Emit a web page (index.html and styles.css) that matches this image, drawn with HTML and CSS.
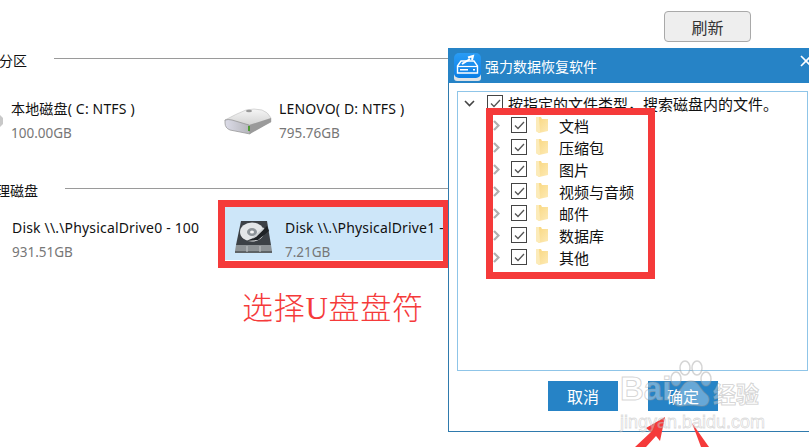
FILE: index.html
```html
<!DOCTYPE html>
<html lang="zh-CN">
<head>
    <meta charset="UTF-8">
    <meta name="viewport" content="width=device-width, initial-scale=1.0">
    <title>强力数据恢复软件</title>
    <link rel="stylesheet" href="styles.css">
</head>
<body>
    <svg class="icon-defs" width="0" height="0">
        <defs>
            <linearGradient id="driveTop" x1="0" y1="0" x2="0" y2="1">
                <stop offset="0" stop-color="#f6f6f6"/>
                <stop offset="1" stop-color="#c4c4c4"/>
            </linearGradient>
            <linearGradient id="driveFront" x1="0" y1="0" x2="1" y2="0">
                <stop offset="0" stop-color="#dcdce8"/>
                <stop offset="1" stop-color="#b4b4ba"/>
            </linearGradient>
            <linearGradient id="folderFill" x1="0" y1="0" x2="1" y2="1">
                <stop offset="0" stop-color="#f9d67c"/>
                <stop offset="1" stop-color="#fdeab6"/>
            </linearGradient>
            <linearGradient id="appFill" x1="0" y1="0" x2="0" y2="1">
                <stop offset="0" stop-color="#2a9cf5"/>
                <stop offset="1" stop-color="#0a7fe6"/>
            </linearGradient>
            <symbol id="tick" viewBox="0 0 11 9"><path d="M1 4.500 L4 7.500 L10 1" fill="none" stroke="#555" stroke-width="1.300"/></symbol>
            <symbol id="chevron" viewBox="0 0 7 11"><path d="M1 1 L5.500 5.500 L1 10" fill="none" stroke="#b0b0b0" stroke-width="2.200"/></symbol>
            <symbol id="folder" viewBox="0 0 13 16"><path d="M0 0 H5 L6 2 L12 2 V14 L3 16 L0 14 Z" fill="url(#folderFill)"/><path d="M0 0 H3 L4 15 L3 16 L0 14 Z" fill="#fcebb9"/></symbol>
        </defs>
    </svg>

    <div class="page">
        <button class="refresh-btn" type="button">刷新</button>

        <div class="section-head section-partition">
            <span class="section-title">本地分区</span>
            <span class="section-line"></span>
        </div>
        <div class="disk-row">
            <div class="disk-item disk-c">
                <svg class="icon-stub" width="4" height="14" viewBox="0 0 4 14"><path d="M0 1 L3 4 V10 L0 13Z" fill="#c8c8c8"/></svg>
                <div class="disk-text">
                    <div class="disk-name">本地磁盘( C: NTFS )</div>
                    <div class="disk-size">100.00GB</div>
                </div>
            </div>
            <div class="disk-item disk-d">
                <svg class="icon-drive" width="48" height="28" viewBox="0 0 48 28">
                    <path d="M1 13 Q12 7 22 3 Q30 1 38 3 Q44 5 47 11 L47 15 L27 25 L5 21 Z" fill="url(#driveTop)" stroke="#bdbdbd" stroke-width=".6"/>
                    <path d="M1 13 Q4 12 8 13 L25 18 L26 27 L6 23 Q1 21 1 16 Z" fill="url(#driveFront)" stroke="#8e8e8e" stroke-width=".7"/>
                    <path d="M25 18 L47 11 L47 15 L26 27 Z" fill="#9a9a9a"/>
                    <ellipse cx="25" cy="4" rx="3" ry="1.200" fill="#9a9a9a"/>
                    <rect x="24" y="19" width="2" height="5" fill="#4c9a32"/>
                </svg>
                <div class="disk-text">
                    <div class="disk-name">LENOVO( D: NTFS )</div>
                    <div class="disk-size">795.76GB</div>
                </div>
            </div>
        </div>

        <div class="section-head section-physical">
            <span class="section-title">物理磁盘</span>
            <span class="section-line"></span>
        </div>
        <div class="disk-row">
            <div class="disk-item disk-0">
                <div class="disk-text">
                    <div class="disk-name">Disk \\.\PhysicalDrive0 - 100</div>
                    <div class="disk-size">931.51GB</div>
                </div>
            </div>
            <div class="disk-item disk-1">
                <svg class="icon-hdd" width="40" height="34" viewBox="0 0 40 34">
                    <path d="M7 1 H33 L37 25 H2 Z" fill="#3c4146"/>
                    <ellipse cx="18" cy="12" rx="12" ry="9.500" fill="#e3e6e8"/>
                    <ellipse cx="18" cy="12" rx="5" ry="4" fill="#8d9499"/>
                    <ellipse cx="18" cy="12" rx="2" ry="1.500" fill="#f5f5f5"/>
                    <path d="M33 6 L22 17 L12 21 L24 20 L35 11 Z" fill="#1f2326"/>
                    <path d="M30 8 L19 18" stroke="#c9ced1" stroke-width="1.200"/>
                    <path d="M2 25 H37 L38 31 H1 Z" fill="#8d9295"/>
                    <path d="M1 31 H38 V33 H1 Z" fill="#5e6366"/>
                    <path d="M13 26 V32 M26 26 V32" stroke="#c4c8ca" stroke-width="1"/>
                </svg>
                <div class="disk-text">
                    <div class="disk-name">Disk \\.\PhysicalDrive1 - 7.</div>
                    <div class="disk-size">7.21GB</div>
                </div>
            </div>
        </div>
    </div>

    <div class="mark-box mark-drive"></div>
    <div class="mark-note">选择<span class="mark-latin">U</span>盘盘符</div>

    <!-- 弹出窗口 -->
    <div class="dialog">
        <div class="dialog-title">
            <svg class="app-icon" width="28" height="28" viewBox="0 0 28 28">
                <rect x="0" y="20" width="27" height="8" rx="3" fill="#dfe3e6"/>
                <rect x="0" y="0" width="27" height="25" rx="5" fill="url(#appFill)"/>
                <path d="M3.500 13 L7 8 H20 L23.500 13 V20 H3.500 Z" fill="none" stroke="#fff" stroke-width="1.400"/>
                <path d="M3.500 13.500 H23.500" stroke="#fff" stroke-width="1.200"/>
                <path d="M8 11 L16 6 M14 4.500 L19 3 L18 7" stroke="#fff" stroke-width="2" fill="none"/>
                <path d="M6 16.800 H14 M19 16.800 H21" stroke="#fff" stroke-width="1.600"/>
            </svg>
            <span class="dialog-name">强力数据恢复软件</span>
            <svg class="dialog-close" width="12" height="12" viewBox="0 0 12 12"><path d="M1 1 L11 11 M11 1 L1 11" stroke="#fff" stroke-width="1.600"/></svg>
        </div>
        <div class="tree">
            <div class="tree-root">
                <svg class="arrow-down" width="11" height="7" viewBox="0 0 11 7"><path d="M1 1 L5.500 5.500 L10 1" fill="none" stroke="#444" stroke-width="1.600"/></svg>
                <span class="check"><svg width="11" height="9"><use href="#tick"/></svg></span>
                <span class="tree-root-label">按指定的文件类型，搜索磁盘内的文件。</span>
            </div>
            <div class="tree-list">
                <div class="tree-row">
                    <svg class="arrow-right" width="7" height="11"><use href="#chevron"/></svg>
                    <span class="check"><svg width="11" height="9"><use href="#tick"/></svg></span>
                    <svg class="folder" width="13" height="16"><use href="#folder"/></svg>
                    <span class="tree-label">文档</span>
                </div>
                <div class="tree-row">
                    <svg class="arrow-right" width="7" height="11"><use href="#chevron"/></svg>
                    <span class="check"><svg width="11" height="9"><use href="#tick"/></svg></span>
                    <svg class="folder" width="13" height="16"><use href="#folder"/></svg>
                    <span class="tree-label">压缩包</span>
                </div>
                <div class="tree-row">
                    <svg class="arrow-right" width="7" height="11"><use href="#chevron"/></svg>
                    <span class="check"><svg width="11" height="9"><use href="#tick"/></svg></span>
                    <svg class="folder" width="13" height="16"><use href="#folder"/></svg>
                    <span class="tree-label">图片</span>
                </div>
                <div class="tree-row">
                    <svg class="arrow-right" width="7" height="11"><use href="#chevron"/></svg>
                    <span class="check"><svg width="11" height="9"><use href="#tick"/></svg></span>
                    <svg class="folder" width="13" height="16"><use href="#folder"/></svg>
                    <span class="tree-label">视频与音频</span>
                </div>
                <div class="tree-row">
                    <svg class="arrow-right" width="7" height="11"><use href="#chevron"/></svg>
                    <span class="check"><svg width="11" height="9"><use href="#tick"/></svg></span>
                    <svg class="folder" width="13" height="16"><use href="#folder"/></svg>
                    <span class="tree-label">邮件</span>
                </div>
                <div class="tree-row">
                    <svg class="arrow-right" width="7" height="11"><use href="#chevron"/></svg>
                    <span class="check"><svg width="11" height="9"><use href="#tick"/></svg></span>
                    <svg class="folder" width="13" height="16"><use href="#folder"/></svg>
                    <span class="tree-label">数据库</span>
                </div>
                <div class="tree-row">
                    <svg class="arrow-right" width="7" height="11"><use href="#chevron"/></svg>
                    <span class="check"><svg width="11" height="9"><use href="#tick"/></svg></span>
                    <svg class="folder" width="13" height="16"><use href="#folder"/></svg>
                    <span class="tree-label">其他</span>
                </div>
            </div>
        </div>
        <div class="dialog-buttons">
            <button class="dialog-btn" type="button">取消</button>
            <button class="dialog-btn" type="button">确定</button>
        </div>
    </div>

    <div class="mark-box mark-tree"></div>

    <!-- 箭头 -->
    <svg class="mark-arrows" width="90" height="35" viewBox="0 0 90 35">
        <path d="M7 35 L23 20 L18 16 L37 5 L32 29 L28 24 L18 35 Z" fill="#f53a3a"/>
        <path d="M64 11 L81 35 H73 Z" fill="#f53a3a"/>
    </svg>

    <!-- 水印 -->
    <div class="watermark">
        <span class="wm-bai">Bai</span>
        <svg class="wm-paw" width="46" height="56" viewBox="0 0 46 56">
            <g fill="rgba(255,255,255,.3)" stroke="rgba(150,150,150,.4)" stroke-width="1.500">
                <ellipse cx="8" cy="19" rx="5" ry="7"/>
                <ellipse cx="17" cy="8" rx="5" ry="7"/>
                <ellipse cx="29" cy="8" rx="5" ry="7"/>
                <ellipse cx="38" cy="19" rx="5" ry="7"/>
                <path d="M23 21 C31 21 32 30 38 34 C44 39 40 47 33 46 C28 45 18 45 13 46 C6 47 2 39 8 34 C14 30 15 21 23 21 Z"/>
            </g>
        </svg>
        <span class="wm-jy">经验</span>
        <span class="wm-url">jingyan.baidu.com</span>
    </div>
</body>
</html>
```

FILE: styles.css
```css
* { box-sizing: border-box; }
html, body { margin: 0; padding: 0; width: 809px; height: 447px; overflow: hidden; background-color: #fff; }
body { position: relative; font-family: "Noto Sans", "Noto Sans CJK SC", sans-serif; font-size: 14px; color: #111; }
.icon-defs { position: absolute; }

.page { width: 448px; }
.refresh-btn { position: absolute; left: 664px; top: 11px; width: 87px; height: 31px; background-color: #eee; border: 1px solid #a9a9a9; border-radius: 4px; font-family: inherit; font-size: 16px; color: #333; padding: 0; }

.section-head { display: flex; align-items: center; height: 20px; }
.section-partition { margin-top: 51px; }
.section-physical { margin-top: 34px; }
.section-title { flex: none; line-height: 20px; white-space: nowrap; }
.section-partition .section-title { margin-left: -29px; margin-right: 27px; }
.section-physical .section-title { margin-left: -18px; margin-right: 27px; }
.section-line { flex: 1; height: 1px; background-color: #9a9a9a; margin-top: -6px; }

.disk-row { display: flex; }
.disk-item { display: flex; align-items: center; height: 53px; }
.disk-name { line-height: 20px; letter-spacing: .17px; white-space: nowrap; }
.disk-size { font-size: 13.500px; line-height: 18px; color: #777; margin-top: 5px; white-space: nowrap; }
.disk-text { margin-top: -1px; }

.disk-c { width: 224px; margin-top: 23px; }
.icon-stub { margin-right: 7px; }
.disk-d { margin-top: 23px; }
.icon-drive { margin-right: 7px; }

.disk-0 { width: 225px; margin-top: 12px; padding-left: 12px; }
.disk-1 { width: 218px; margin-top: 6px; background-color: #cde6f9; padding-left: 9px; overflow: hidden; }
.disk-1 .disk-text { margin-top: 11px; }
.icon-hdd { margin: 6px 11px 0 0; flex: none; }

.mark-box { position: absolute; border: 7px solid #f53a3a; }
.mark-drive { left: 218px; top: 200px; width: 232px; height: 68px; }
.mark-tree { left: 486px; top: 108px; width: 169px; height: 171px; }
.mark-note { position: absolute; left: 242px; top: 285px; font-family: "Noto Sans CJK SC", serif; font-size: 31px; font-weight: 300; letter-spacing: .7px; line-height: 42px; color: #f53a3a; white-space: nowrap; }
.mark-latin { font-family: "Liberation Serif", serif; }
.mark-arrows { position: absolute; left: 628px; top: 412px; }

.dialog { position: absolute; left: 448px; top: 48px; width: 370px; height: 384px; background-color: #fff; border: 1px solid #2f7aad; display: flex; flex-direction: column; }
.dialog-title { display: flex; align-items: center; height: 35px; margin: -1px -1px 0 -1px; background-color: #2683c6; padding-left: 6px; flex: none; }
.app-icon { flex: none; margin-top: 3px; }
.dialog-name { margin-left: 3px; font-size: 14px; color: #fff; }
.dialog-close { position: absolute; left: 351px; top: 6px; }

.tree { margin: 8px 0 0 8px; width: 351px; height: 280px; border: 1px solid #8fc5e8; flex: none; }
.tree-root { display: flex; align-items: center; height: 22px; padding-left: 6px; }
.arrow-down { flex: none; }
.tree-root .check { margin-left: 12px; }
.tree-root-label { margin-left: 5px; font-size: 15px; white-space: nowrap; }
.tree-list { display: flex; flex-direction: column; padding-left: 35px; }
.tree-row { display: flex; align-items: center; height: 22px; }
.arrow-right { flex: none; }
.check { display: flex; align-items: center; justify-content: center; width: 16px; height: 16px; border: 1px solid #444; background-color: #fff; flex: none; }
.tree-row .check { margin-left: 11px; }
.folder { flex: none; margin-left: 9px; }
.tree-label { margin-left: 10px; font-size: 15px; white-space: nowrap; }

.dialog-buttons { display: flex; gap: 30px; margin: 10px 0 0 99px; }
.dialog-btn { width: 70px; height: 30px; background-color: #2683c6; color: #fff; border: none; font-family: inherit; font-size: 16px; padding: 0; }

.watermark { position: absolute; left: 620px; top: 360px; width: 146px; height: 72px; }
.wm-bai { position: absolute; left: 0; top: 10px; font-family: "Liberation Sans", sans-serif; font-weight: bold; font-size: 33px; line-height: 38px; color: rgba(255,255,255,.35); -webkit-text-stroke: 1px rgba(150,150,150,.4); }
.wm-paw { position: absolute; left: 48px; top: 0; }
.wm-jy { position: absolute; left: 93px; top: 20px; font-size: 23px; line-height: 28px; font-weight: bold; color: rgba(255,255,255,.35); -webkit-text-stroke: 1px rgba(150,150,150,.4); white-space: nowrap; }
.wm-url { position: absolute; left: 0; top: 52px; font-family: "Liberation Sans", sans-serif; font-size: 18px; line-height: 20px; color: rgba(255,255,255,.35); -webkit-text-stroke: .8px rgba(150,150,150,.35); white-space: nowrap; }
```
